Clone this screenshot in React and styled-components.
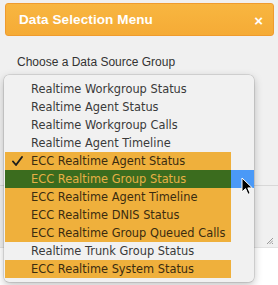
import React from "react";
import styled, { createGlobalStyle } from "styled-components";

const Global = createGlobalStyle`
  html, body { margin: 0; padding: 0; background: #ffffff; }
  body { width: 278px; height: 285px; overflow: hidden; font-family: "Liberation Sans", Arial, sans-serif; }
`;

const Stage = styled.div`
  position: relative;
  width: 278px;
  height: 285px;
`;

const Panel = styled.div`
  height: 248px;
  box-sizing: border-box;
  background: #f0f0f0;
  border-bottom: 1px solid #e2e2e2;
  padding-top: 3px;
  display: flex;
  flex-direction: column;
`;

const Header = styled.div`
  height: 33px;
  box-sizing: border-box;
  margin: 0 4px 0 5px;
  border: 1px solid #ef9b2e;
  border-radius: 3px;
  background: linear-gradient(#f8b640, #f5ab36);
  display: flex;
  align-items: center;
  justify-content: space-between;
  padding: 0 10px 0 13px;
`;

const Title = styled.span`
  color: #ffffff;
  font-weight: bold;
  font-size: 13.5px;
  letter-spacing: 0.1px;
`;

const Close = styled.span`
  color: #ffffff;
  font-weight: bold;
  font-size: 15px;
  line-height: 1;
  margin-top: 1px;
`;

const Label = styled.div`
  margin-top: 18px;
  padding-left: 17px;
  font-size: 12px;
  line-height: 16px;
  color: #333333;
`;

const Field = styled.div`
  height: 115px;
`;

const Divider = styled.div`
  height: 1px;
  background: #d8d8d8;
`;

const Bottom = styled.div`
  flex: 1;
  display: flex;
  justify-content: flex-end;
  align-items: flex-end;
  padding: 0 5px 3px 0;
`;

const Menu = styled.div`
  position: absolute;
  left: 4px;
  top: 75px;
  width: 250px;
  height: 207px;
  box-sizing: border-box;
  padding: 5px 0 0 1px;
  background: #f1f1f1;
  border-radius: 5px;
  box-shadow: 0 0 0 0.5px rgba(0, 0, 0, 0.18), 0 3px 9px rgba(0, 0, 0, 0.25);
  overflow: hidden;
`;

const Row = styled.div`
  display: flex;
  height: 18px;
  background: ${(p) => (p.$hover ? "#4a99f7" : "transparent")};
`;

const bg = { plain: "transparent", ecc: "#efb03c", active: "#3b6c1e" };
const fg = { plain: "#3a3a3a", ecc: "#3b2c10", active: "#e7b045" };

const Option = styled.div`
  position: relative;
  width: 226px;
  height: 18px;
  box-sizing: border-box;
  padding-left: 26px;
  background: ${(p) => bg[p.$kind]};
  color: ${(p) => fg[p.$kind]};
  font-family: "DejaVu Sans", Verdana, sans-serif;
  font-size: 11.4px;
  line-height: 18px;
  white-space: nowrap;
`;

const Check = styled.svg`
  position: absolute;
  left: 7px;
  top: 4px;
`;

const Cursor = styled.svg`
  position: absolute;
  left: 241px;
  top: 177px;
`;

const items = [
  ["Realtime Workgroup Status", "plain"],
  ["Realtime Agent Status", "plain"],
  ["Realtime Workgroup Calls", "plain"],
  ["Realtime Agent Timeline", "plain"],
  ["ECC Realtime Agent Status", "ecc", true],
  ["ECC Realtime Group Status", "active", false, true],
  ["ECC Realtime Agent Timeline", "ecc"],
  ["ECC Realtime DNIS Status", "ecc"],
  ["ECC Realtime Group Queued Calls", "ecc"],
  ["Realtime Trunk Group Status", "plain"],
  ["ECC Realtime System Status", "ecc"],
];

export default function App() {
  return (
    <Stage>
      <Global />
      <Panel>
        <Header>
          <Title>Data Selection Menu</Title>
          <Close>×</Close>
        </Header>
        <Label>Choose a Data Source Group</Label>
        <Field />
        <Divider />
        <Bottom>
          <svg width="7" height="7" viewBox="0 0 7 7">
            <path d="M1 7 L7 1 M3.5 7 L7 3.5 M6 7 L7 6" stroke="#9a9a9a" strokeWidth="1" />
          </svg>
        </Bottom>
      </Panel>
      <Menu>
        {items.map(([text, kind, checked, hover]) => (
          <Row key={text} $hover={hover}>
            <Option $kind={kind}>
              {checked && (
                <Check width="11" height="10" viewBox="0 0 11 10">
                  <path d="M1 5.5 L4 9 L10 1" fill="none" stroke="#1e1e1e" strokeWidth="1.9" strokeLinecap="round" strokeLinejoin="round" />
                </Check>
              )}
              {text}
            </Option>
          </Row>
        ))}
      </Menu>
      <Cursor width="13" height="19" viewBox="0 0 13 19">
        <path d="M1 1 L1 15 L4.5 11.6 L7 17.3 L9.2 16.4 L6.8 10.9 L11.3 10.9 Z" fill="#000" stroke="#fff" strokeWidth="1" strokeLinejoin="round" />
      </Cursor>
    </Stage>
  );
}
